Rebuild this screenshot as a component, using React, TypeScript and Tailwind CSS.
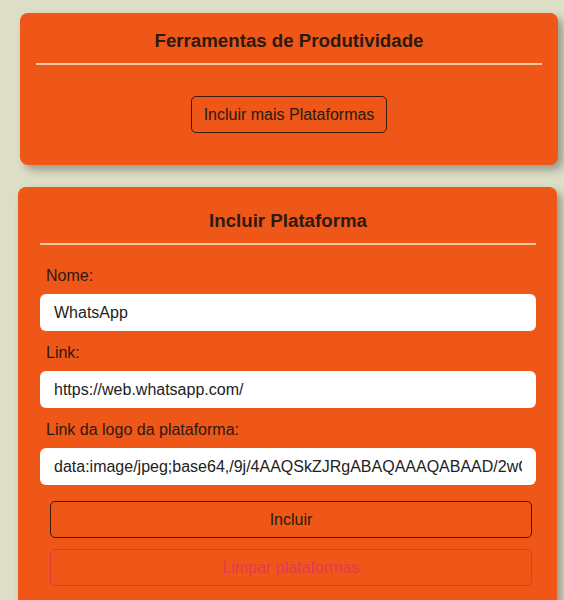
export default function App() {
  return (
    <div className="min-h-[600px] bg-[#dddec6] pt-[13px] pb-4 font-['Liberation_Sans',Arial,sans-serif] text-[#2d1a0f]">
      {/* Ferramentas */}
      <div className="ml-[20px] w-[538px] rounded-lg bg-[#ee5718] px-4 pt-[17px] pb-[32px] shadow-[5px_5px_8px_rgba(0,0,0,0.3)]">
        <h2 className="text-center text-[18.7px] leading-[21px] font-bold">Ferramentas de Produtividade</h2>
        <div className="mt-[12px] h-[2px] bg-[#f9c8a0]" />
        <div className="mt-[31px] flex justify-center">
          <button className="h-[37px] w-[196px] rounded-[5px] border border-[#3a1a0a] text-[16px]">
            Incluir mais Plataformas
          </button>
        </div>
      </div>

      {/* Incluir Plataforma */}
      <div className="mt-[22px] ml-[18px] w-[539px] rounded-lg bg-[#ee5718] pl-[22px] pr-[21px] pt-[23px] pb-6 shadow-[5px_5px_8px_rgba(0,0,0,0.3)]">
        <h2 className="text-center text-[18.7px] leading-[21px] font-bold">Incluir Plataforma</h2>
        <div className="mt-[12px] h-[2px] bg-[#f9c8a0]" />
        <div className="mt-[21px] flex flex-col">
          <Field label="Nome:" value="WhatsApp" />
          <Field label="Link:" value="https://web.whatsapp.com/" />
          <Field
            label="Link da logo da plataforma:"
            value="data:image/jpeg;base64,/9j/4AAQSkZJRgABAQAAAQABAAD/2wCEAAkGBxITEhUTEhIWFhUXGBgYGBgXFxgYGBgXGBcXGBcYGBgYHSggGBolHRcXITEhJSkrLi4u"
          />
        </div>
        <div className="mt-[4px] flex flex-col gap-[11px] pl-[10px] pr-[4px]">
          <button className="h-[37px] w-full rounded-[5px] border border-[#3a1a0a] text-[16px]">Incluir</button>
          <button className="h-[37px] w-full rounded-[5px] border border-[#e0393a] text-[16px] text-[#e33a55]">
            Limpar plataformas
          </button>
        </div>
      </div>
    </div>
  )
}

function Field({ label, value }: { label: string; value: string }) {
  return (
    <div className="mb-[12px] flex flex-col">
      <label className="pl-[6px] text-[16px] leading-[19px]">{label}</label>
      <input
        readOnly
        value={value}
        className="mt-[9px] h-[37px] w-full rounded-[6px] bg-white px-[14px] text-[16px] text-[#222] outline-none font-['Liberation_Sans',Arial,sans-serif]"
      />
    </div>
  )
}
